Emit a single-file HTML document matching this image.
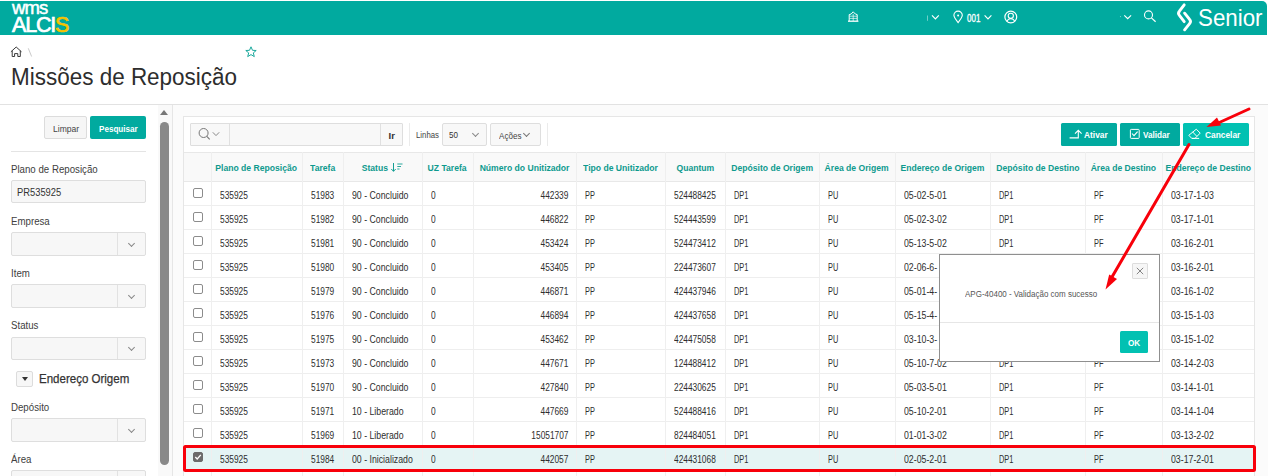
<!DOCTYPE html><html><head><meta charset="utf-8"><style>
*{box-sizing:border-box;margin:0;padding:0}
html,body{width:1268px;height:476px;overflow:hidden;background:#fff;font-family:"Liberation Sans",sans-serif;color:#3f3f3f}
.ab{position:absolute}
.t{position:absolute;white-space:nowrap;line-height:1}
.sx{display:inline-block;transform-origin:0 50%}
.hd{font-weight:bold;color:#0e9a8e;font-size:9.3px}
.cell{font-size:10px;color:#2e2e2e}
.lbl{font-size:11px;color:#404040}
.sel{position:absolute;left:11px;width:135px;height:23.5px;border:1px solid #dedede;background:#f7f7f7;border-radius:2px}
.sel i{position:absolute;left:105px;top:0;bottom:0;width:1px;background:#e2e2e2}
.chev{position:absolute;width:5px;height:5px;border-right:1px solid #777;border-bottom:1px solid #777;transform:rotate(45deg)}
.cb{position:absolute;width:10px;height:10px;border:1px solid #8c8c8c;border-radius:2px;background:#fff}
.btn{position:absolute;background:#01aa9f;border-radius:1.5px;color:#fff;font-weight:bold;font-size:9.5px}
</style></head><body>
<div class='ab' style='left:0;top:1px;width:1267px;height:33.5px;background:#01aa9f;border-top-right-radius:5px'></div>
<div class='t' style='left:12px;top:-1.5px;font-size:18.5px;color:#fff;letter-spacing:-0.9px;-webkit-text-stroke:0.5px #fff'><span class='sx' style='transform:scaleX(1.0)'>wms</span></div>
<div class='t' style='left:12px;top:14.5px;font-size:21.5px;color:#fff;letter-spacing:-1.2px;-webkit-text-stroke:0.7px #fff'><span class='sx' style='transform:scaleX(1.0)'>ALCI<span style='color:#f7c300;-webkit-text-stroke:0.7px #f7c300'>S</span></span></div>
<svg class='ab' style='left:0;top:40px' width='40' height='20' viewBox='0 40 40 20' fill='none'><path d='M10.9 51.8 L16.2 47 L21.5 51.8 M12.2 50.8 V56.5 H14.6 V53.6 H17.8 V56.5 H20.3 V50.8' stroke='#3a3a3a' stroke-width='1'/><path d='M28.3 48.3 L31.6 56.5' stroke='#bbb' stroke-width='0.8'/></svg>
<svg class='ab' style='left:245px;top:46px' width='12' height='12' viewBox='0 0 12 12'><path d='M6 0.8 L7.5 4.3 L11.2 4.5 L8.3 6.9 L9.3 10.6 L6 8.6 L2.7 10.6 L3.7 6.9 L0.8 4.5 L4.5 4.3 Z' fill='none' stroke='#1aa89c' stroke-width='1'/></svg>
<div class='t' style='left:10.5px;top:66px;font-size:23px;color:#2d2d2d'><span class='sx' style='transform:scaleX(0.977)'>Missões de Reposição</span></div>
<div class='ab' style='left:0;top:103.5px;width:1268px;height:1.5px;background:#e2e2e2'></div>
<div class='ab' style='left:173px;top:105px;width:1095px;height:371px;background:#fbfbfb'></div>
<div class='ab' style='left:172px;top:105px;width:1px;height:371px;background:#e6e6e6'></div>
<div class='ab' style='left:158px;top:105px;width:14px;height:371px;background:#f9f9f9'></div>
<div class='ab' style='left:160px;top:110px;width:0;height:0;border-left:4.5px solid transparent;border-right:4.5px solid transparent;border-bottom:5px solid #777'></div>
<div class='ab' style='left:160px;top:122px;width:9px;height:342.5px;background:#898989;border-radius:4.5px'></div>
<div class='ab' style='left:44px;top:116px;width:43px;height:23px;background:#f6f6f6;border:1px solid #dcdcdc;border-radius:2px'></div>
<div class='t' style='left:52.5px;top:124.5px;font-size:9px;color:#444'><span class='sx' style='transform:scaleX(0.95)'>Limpar</span></div>
<div class='ab' style='left:90px;top:116px;width:56px;height:23px;background:#01aa9f;border-radius:2px'></div>
<div class='t' style='left:99px;top:125px;font-size:9px;color:#fff;font-weight:bold'><span class='sx' style='transform:scaleX(0.9)'>Pesquisar</span></div>
<div class='ab' style='left:11px;top:151px;width:135px;height:1px;background:#e4e4e4'></div>
<div class='t lbl' style='left:11px;top:164.2px'><span class='sx' style='transform:scaleX(0.88)'>Plano de Reposição</span></div>
<div class='ab' style='left:11px;top:180px;width:135px;height:23px;background:#f7f7f7;border:1px solid #dedede;border-radius:2px'></div>
<div class='t' style='left:17px;top:187px;font-size:11px;color:#333'><span class='sx' style='transform:scaleX(0.85)'>PR535925</span></div>
<div class='t lbl' style='left:11px;top:216.0px'><span class='sx' style='transform:scaleX(0.88)'>Empresa</span></div>
<div class='sel' style='top:232px'><i></i><div class='chev' style='left:116.5px;top:7.5px;border-color:#888'></div></div>
<div class='t lbl' style='left:11px;top:268.0px'><span class='sx' style='transform:scaleX(0.88)'>Item</span></div>
<div class='sel' style='top:284px'><i></i><div class='chev' style='left:116.5px;top:7.5px;border-color:#888'></div></div>
<div class='t lbl' style='left:11px;top:320.1px'><span class='sx' style='transform:scaleX(0.88)'>Status</span></div>
<div class='sel' style='top:336.5px'><i></i><div class='chev' style='left:116.5px;top:7.5px;border-color:#888'></div></div>
<div class='ab' style='left:16px;top:371px;width:17px;height:16px;background:#f7f7f7;border:1px solid #dcdcdc;border-radius:2px'></div>
<div class='ab' style='left:21.5px;top:377px;width:0;height:0;border-left:3px solid transparent;border-right:3px solid transparent;border-top:4px solid #333'></div>
<div class='t' style='left:39px;top:373px;font-size:12.8px;color:#333;-webkit-text-stroke:0.25px #333'><span class='sx' style='transform:scaleX(0.9)'>Endereço Origem</span></div>
<div class='t lbl' style='left:11px;top:401.7px'><span class='sx' style='transform:scaleX(0.88)'>Depósito</span></div>
<div class='sel' style='top:418px'><i></i><div class='chev' style='left:116.5px;top:7.5px;border-color:#888'></div></div>
<div class='t lbl' style='left:11px;top:453.9px'><span class='sx' style='transform:scaleX(0.88)'>Área</span></div>
<div class='sel' style='top:470px'><i></i><div class='chev' style='left:116.5px;top:7.5px;border-color:#888'></div></div>
<div class='ab' style='left:183px;top:116px;width:1072px;height:370px;background:#fff;border:1px solid #e6e6e6'></div>
<div class='ab' style='left:190px;top:123px;width:213px;height:23px;background:#f8f8f8;border:1px solid #dedede;border-radius:1px'></div>
<div class='ab' style='left:229px;top:124px;width:1px;height:21px;background:#e0e0e0'></div>
<div class='ab' style='left:380px;top:124px;width:1px;height:21px;background:#e0e0e0'></div>
<svg class='ab' style='left:197px;top:127px' width='24' height='14' viewBox='0 0 24 14'><circle cx='6.6' cy='6' r='4.5' fill='none' stroke='#777' stroke-width='1'/><path d='M9.8 9.3 L12.7 12.4' stroke='#777' stroke-width='1.1'/><path d='M15.8 5.3 L19 8.6 L22.2 5.3' fill='none' stroke='#888' stroke-width='1'/></svg>
<div class='t' style='left:388.5px;top:131px;font-size:9.5px;color:#333;font-weight:bold'>Ir</div>
<div class='ab' style='left:409px;top:123px;width:1px;height:23px;background:#ebebeb'></div>
<div class='t' style='left:415.5px;top:130px;font-size:9.5px;color:#444'><span class='sx' style='transform:scaleX(0.82)'>Linhas</span></div>
<div class='ab' style='left:442px;top:123px;width:45px;height:23px;background:#f8f8f8;border:1px solid #dedede;border-radius:2px'></div>
<div class='t' style='left:449px;top:130px;font-size:9.5px;color:#333'><span class='sx' style='transform:scaleX(0.85)'>50</span></div>
<div class='chev' style='left:472.5px;top:131px;border-color:#888'></div>
<div class='ab' style='left:490px;top:123px;width:51px;height:23px;background:#f8f8f8;border:1px solid #dedede;border-radius:2px'></div>
<div class='t' style='left:498.5px;top:130.5px;font-size:9.5px;color:#444'><span class='sx' style='transform:scaleX(0.85)'>Ações</span></div>
<div class='chev' style='left:524px;top:130.5px;border-color:#777'></div>
<div class='ab' style='left:547px;top:123px;width:1px;height:23px;background:#ebebeb'></div>
<div class='btn' style='left:1061px;top:123px;width:56px;height:23px'></div>
<svg class='ab' style='left:1060px;top:120px' width='30' height='25' viewBox='1060 120 30 25'><path d='M1069.6 137.9 H1078.3 V130.8 M1075 133.6 L1078.3 130.3 L1081.6 133.6' fill='none' stroke='#fff' stroke-width='1.1'/></svg>
<div class='t' style='left:1084px;top:130px;font-size:9.5px;color:#fff;font-weight:bold'><span class='sx' style='transform:scaleX(0.88)'>Ativar</span></div>
<div class='btn' style='left:1120px;top:123px;width:60px;height:23px'></div>
<svg class='ab' style='left:1129px;top:128px' width='12' height='12' viewBox='0 0 12 12'><rect x='1.4' y='1.4' width='8.8' height='9' rx='0.8' fill='none' stroke='#fff' stroke-width='1'/><path d='M3 5.5 L5 7.7 L8.6 3.6' fill='none' stroke='#fff' stroke-width='1.1'/></svg>
<div class='t' style='left:1143px;top:130px;font-size:9.5px;color:#fff;font-weight:bold'><span class='sx' style='transform:scaleX(0.86)'>Validar</span></div>
<div class='btn' style='left:1183px;top:123px;width:66px;height:23px;background:#02c1b2'></div>
<svg class='ab' style='left:1180px;top:120px' width='30' height='25' viewBox='1180 120 30 25'><path d='M1188.8 135.3 L1196.3 129.2 L1200.2 133.1 L1195 138.4 H1191.8 Z M1192.5 131.8 L1196.7 136.2 M1191.8 138.4 H1199.2' fill='none' stroke='#fff' stroke-width='1'/></svg>
<div class='t' style='left:1205px;top:130px;font-size:9.5px;color:#fff;font-weight:bold'><span class='sx' style='transform:scaleX(0.88)'>Cancelar</span></div>
<div class='ab' style='left:183px;top:152px;width:1072px;height:30px;background:#f9f9f9;border-top:1px solid #e8e8e8;border-bottom:1px solid #e8e8e8'></div>
<div class='t hd' style='left:211px;width:91px;top:163.6px;text-align:center'><span class='sx' style='transform:scaleX(0.925);transform-origin:50% 50%'>Plano de Reposição</span></div>
<div class='t hd' style='left:302px;width:41px;top:163.6px;text-align:center'><span class='sx' style='transform:scaleX(0.925);transform-origin:50% 50%'>Tarefa</span></div>
<div class='t hd' style='left:343px;width:79px;top:163.6px;text-align:center'><span class='sx' style='transform:scaleX(0.925);transform-origin:50% 50%'>Status <span style='display:inline-block;width:14px'></span></span></div>
<div class='t hd' style='left:422px;width:51px;top:163.6px;text-align:center'><span class='sx' style='transform:scaleX(0.925);transform-origin:50% 50%'>UZ Tarefa</span></div>
<div class='t hd' style='left:473px;width:103px;top:163.6px;text-align:center'><span class='sx' style='transform:scaleX(0.925);transform-origin:50% 50%'>Número do Unitizador</span></div>
<div class='t hd' style='left:576px;width:89px;top:163.6px;text-align:center'><span class='sx' style='transform:scaleX(0.925);transform-origin:50% 50%'>Tipo de Unitizador</span></div>
<div class='t hd' style='left:665px;width:60px;top:163.6px;text-align:center'><span class='sx' style='transform:scaleX(0.925);transform-origin:50% 50%'>Quantum</span></div>
<div class='t hd' style='left:725px;width:94px;top:163.6px;text-align:center'><span class='sx' style='transform:scaleX(0.925);transform-origin:50% 50%'>Depósito de Origem</span></div>
<div class='t hd' style='left:819px;width:76px;top:163.6px;text-align:center'><span class='sx' style='transform:scaleX(0.925);transform-origin:50% 50%'>Área de Origem</span></div>
<div class='t hd' style='left:895px;width:95px;top:163.6px;text-align:center'><span class='sx' style='transform:scaleX(0.925);transform-origin:50% 50%'>Endereço de Origem</span></div>
<div class='t hd' style='left:990px;width:95px;top:163.6px;text-align:center'><span class='sx' style='transform:scaleX(0.925);transform-origin:50% 50%'>Depósito de Destino</span></div>
<div class='t hd' style='left:1085px;width:77px;top:163.6px;text-align:center'><span class='sx' style='transform:scaleX(0.925);transform-origin:50% 50%'>Área de Destino</span></div>
<div class='t hd' style='left:1162px;width:92px;top:163.6px;text-align:center'><span class='sx' style='transform:scaleX(0.925);transform-origin:50% 50%'>Endereço de Destino</span></div>
<svg class='ab' style='left:388px;top:160px' width='18' height='14' viewBox='0 0 18 14'><path d='M5.5 3 V11.3 M3.3 9 L5.5 11.3 L7.7 9' fill='none' stroke='#129e93' stroke-width='1'/><path d='M9.3 4 H14.5 M9.3 6.5 H13 M9.3 9 H11.5' stroke='#129e93' stroke-width='0.9'/></svg>
<div class='ab' style='left:184px;top:205px;width:1070px;height:1px;background:#eeeeee'></div>
<div class='cb' style='left:193px;top:188px'></div>
<div class='t cell' style='left:220px;top:190.6px'><span class='sx' style='transform:scaleX(0.835)'>535925</span></div>
<div class='t cell' style='left:311px;top:190.6px'><span class='sx' style='transform:scaleX(0.835)'>51983</span></div>
<div class='t cell' style='left:352px;top:190.6px'><span class='sx' style='transform:scaleX(0.875)'>90 - Concluido</span></div>
<div class='t cell' style='left:431px;top:190.6px'><span class='sx' style='transform:scaleX(0.835)'>0</span></div>
<div class='t cell' style='left:473px;width:95px;top:190.6px;text-align:right'><span class='sx' style='transform:scaleX(0.835);transform-origin:100% 50%'>442339</span></div>
<div class='t cell' style='left:585px;top:190.6px'><span class='sx' style='transform:scaleX(0.74)'>PP</span></div>
<div class='t cell' style='left:674px;top:190.6px'><span class='sx' style='transform:scaleX(0.835)'>524488425</span></div>
<div class='t cell' style='left:734px;top:190.6px'><span class='sx' style='transform:scaleX(0.74)'>DP1</span></div>
<div class='t cell' style='left:828px;top:190.6px'><span class='sx' style='transform:scaleX(0.74)'>PU</span></div>
<div class='t cell' style='left:904px;top:190.6px'><span class='sx' style='transform:scaleX(0.875)'>05-02-5-01</span></div>
<div class='t cell' style='left:999px;top:190.6px'><span class='sx' style='transform:scaleX(0.74)'>DP1</span></div>
<div class='t cell' style='left:1094px;top:190.6px'><span class='sx' style='transform:scaleX(0.74)'>PF</span></div>
<div class='t cell' style='left:1171px;top:190.6px'><span class='sx' style='transform:scaleX(0.875)'>03-17-1-03</span></div>
<div class='ab' style='left:184px;top:229px;width:1070px;height:1px;background:#eeeeee'></div>
<div class='cb' style='left:193px;top:212px'></div>
<div class='t cell' style='left:220px;top:214.6px'><span class='sx' style='transform:scaleX(0.835)'>535925</span></div>
<div class='t cell' style='left:311px;top:214.6px'><span class='sx' style='transform:scaleX(0.835)'>51982</span></div>
<div class='t cell' style='left:352px;top:214.6px'><span class='sx' style='transform:scaleX(0.875)'>90 - Concluido</span></div>
<div class='t cell' style='left:431px;top:214.6px'><span class='sx' style='transform:scaleX(0.835)'>0</span></div>
<div class='t cell' style='left:473px;width:95px;top:214.6px;text-align:right'><span class='sx' style='transform:scaleX(0.835);transform-origin:100% 50%'>446822</span></div>
<div class='t cell' style='left:585px;top:214.6px'><span class='sx' style='transform:scaleX(0.74)'>PP</span></div>
<div class='t cell' style='left:674px;top:214.6px'><span class='sx' style='transform:scaleX(0.835)'>524443599</span></div>
<div class='t cell' style='left:734px;top:214.6px'><span class='sx' style='transform:scaleX(0.74)'>DP1</span></div>
<div class='t cell' style='left:828px;top:214.6px'><span class='sx' style='transform:scaleX(0.74)'>PU</span></div>
<div class='t cell' style='left:904px;top:214.6px'><span class='sx' style='transform:scaleX(0.875)'>05-02-3-02</span></div>
<div class='t cell' style='left:999px;top:214.6px'><span class='sx' style='transform:scaleX(0.74)'>DP1</span></div>
<div class='t cell' style='left:1094px;top:214.6px'><span class='sx' style='transform:scaleX(0.74)'>PF</span></div>
<div class='t cell' style='left:1171px;top:214.6px'><span class='sx' style='transform:scaleX(0.875)'>03-17-1-01</span></div>
<div class='ab' style='left:184px;top:253px;width:1070px;height:1px;background:#eeeeee'></div>
<div class='cb' style='left:193px;top:236px'></div>
<div class='t cell' style='left:220px;top:238.6px'><span class='sx' style='transform:scaleX(0.835)'>535925</span></div>
<div class='t cell' style='left:311px;top:238.6px'><span class='sx' style='transform:scaleX(0.835)'>51981</span></div>
<div class='t cell' style='left:352px;top:238.6px'><span class='sx' style='transform:scaleX(0.875)'>90 - Concluido</span></div>
<div class='t cell' style='left:431px;top:238.6px'><span class='sx' style='transform:scaleX(0.835)'>0</span></div>
<div class='t cell' style='left:473px;width:95px;top:238.6px;text-align:right'><span class='sx' style='transform:scaleX(0.835);transform-origin:100% 50%'>453424</span></div>
<div class='t cell' style='left:585px;top:238.6px'><span class='sx' style='transform:scaleX(0.74)'>PP</span></div>
<div class='t cell' style='left:674px;top:238.6px'><span class='sx' style='transform:scaleX(0.835)'>524473412</span></div>
<div class='t cell' style='left:734px;top:238.6px'><span class='sx' style='transform:scaleX(0.74)'>DP1</span></div>
<div class='t cell' style='left:828px;top:238.6px'><span class='sx' style='transform:scaleX(0.74)'>PU</span></div>
<div class='t cell' style='left:904px;top:238.6px'><span class='sx' style='transform:scaleX(0.875)'>05-13-5-02</span></div>
<div class='t cell' style='left:999px;top:238.6px'><span class='sx' style='transform:scaleX(0.74)'>DP1</span></div>
<div class='t cell' style='left:1094px;top:238.6px'><span class='sx' style='transform:scaleX(0.74)'>PF</span></div>
<div class='t cell' style='left:1171px;top:238.6px'><span class='sx' style='transform:scaleX(0.875)'>03-16-2-01</span></div>
<div class='ab' style='left:184px;top:277px;width:1070px;height:1px;background:#eeeeee'></div>
<div class='cb' style='left:193px;top:260px'></div>
<div class='t cell' style='left:220px;top:262.6px'><span class='sx' style='transform:scaleX(0.835)'>535925</span></div>
<div class='t cell' style='left:311px;top:262.6px'><span class='sx' style='transform:scaleX(0.835)'>51980</span></div>
<div class='t cell' style='left:352px;top:262.6px'><span class='sx' style='transform:scaleX(0.875)'>90 - Concluido</span></div>
<div class='t cell' style='left:431px;top:262.6px'><span class='sx' style='transform:scaleX(0.835)'>0</span></div>
<div class='t cell' style='left:473px;width:95px;top:262.6px;text-align:right'><span class='sx' style='transform:scaleX(0.835);transform-origin:100% 50%'>453405</span></div>
<div class='t cell' style='left:585px;top:262.6px'><span class='sx' style='transform:scaleX(0.74)'>PP</span></div>
<div class='t cell' style='left:674px;top:262.6px'><span class='sx' style='transform:scaleX(0.835)'>224473607</span></div>
<div class='t cell' style='left:734px;top:262.6px'><span class='sx' style='transform:scaleX(0.74)'>DP1</span></div>
<div class='t cell' style='left:828px;top:262.6px'><span class='sx' style='transform:scaleX(0.74)'>PU</span></div>
<div class='t cell' style='left:904px;top:262.6px'><span class='sx' style='transform:scaleX(0.875)'>02-06-6-</span></div>
<div class='t cell' style='left:999px;top:262.6px'><span class='sx' style='transform:scaleX(0.74)'>DP1</span></div>
<div class='t cell' style='left:1094px;top:262.6px'><span class='sx' style='transform:scaleX(0.74)'>PF</span></div>
<div class='t cell' style='left:1171px;top:262.6px'><span class='sx' style='transform:scaleX(0.875)'>03-16-2-01</span></div>
<div class='ab' style='left:184px;top:301px;width:1070px;height:1px;background:#eeeeee'></div>
<div class='cb' style='left:193px;top:284px'></div>
<div class='t cell' style='left:220px;top:286.6px'><span class='sx' style='transform:scaleX(0.835)'>535925</span></div>
<div class='t cell' style='left:311px;top:286.6px'><span class='sx' style='transform:scaleX(0.835)'>51979</span></div>
<div class='t cell' style='left:352px;top:286.6px'><span class='sx' style='transform:scaleX(0.875)'>90 - Concluido</span></div>
<div class='t cell' style='left:431px;top:286.6px'><span class='sx' style='transform:scaleX(0.835)'>0</span></div>
<div class='t cell' style='left:473px;width:95px;top:286.6px;text-align:right'><span class='sx' style='transform:scaleX(0.835);transform-origin:100% 50%'>446871</span></div>
<div class='t cell' style='left:585px;top:286.6px'><span class='sx' style='transform:scaleX(0.74)'>PP</span></div>
<div class='t cell' style='left:674px;top:286.6px'><span class='sx' style='transform:scaleX(0.835)'>424437946</span></div>
<div class='t cell' style='left:734px;top:286.6px'><span class='sx' style='transform:scaleX(0.74)'>DP1</span></div>
<div class='t cell' style='left:828px;top:286.6px'><span class='sx' style='transform:scaleX(0.74)'>PU</span></div>
<div class='t cell' style='left:904px;top:286.6px'><span class='sx' style='transform:scaleX(0.875)'>05-01-4-</span></div>
<div class='t cell' style='left:999px;top:286.6px'><span class='sx' style='transform:scaleX(0.74)'>DP1</span></div>
<div class='t cell' style='left:1094px;top:286.6px'><span class='sx' style='transform:scaleX(0.74)'>PF</span></div>
<div class='t cell' style='left:1171px;top:286.6px'><span class='sx' style='transform:scaleX(0.875)'>03-16-1-02</span></div>
<div class='ab' style='left:184px;top:325px;width:1070px;height:1px;background:#eeeeee'></div>
<div class='cb' style='left:193px;top:308px'></div>
<div class='t cell' style='left:220px;top:310.6px'><span class='sx' style='transform:scaleX(0.835)'>535925</span></div>
<div class='t cell' style='left:311px;top:310.6px'><span class='sx' style='transform:scaleX(0.835)'>51976</span></div>
<div class='t cell' style='left:352px;top:310.6px'><span class='sx' style='transform:scaleX(0.875)'>90 - Concluido</span></div>
<div class='t cell' style='left:431px;top:310.6px'><span class='sx' style='transform:scaleX(0.835)'>0</span></div>
<div class='t cell' style='left:473px;width:95px;top:310.6px;text-align:right'><span class='sx' style='transform:scaleX(0.835);transform-origin:100% 50%'>446894</span></div>
<div class='t cell' style='left:585px;top:310.6px'><span class='sx' style='transform:scaleX(0.74)'>PP</span></div>
<div class='t cell' style='left:674px;top:310.6px'><span class='sx' style='transform:scaleX(0.835)'>424437658</span></div>
<div class='t cell' style='left:734px;top:310.6px'><span class='sx' style='transform:scaleX(0.74)'>DP1</span></div>
<div class='t cell' style='left:828px;top:310.6px'><span class='sx' style='transform:scaleX(0.74)'>PU</span></div>
<div class='t cell' style='left:904px;top:310.6px'><span class='sx' style='transform:scaleX(0.875)'>05-15-4-</span></div>
<div class='t cell' style='left:999px;top:310.6px'><span class='sx' style='transform:scaleX(0.74)'>DP1</span></div>
<div class='t cell' style='left:1094px;top:310.6px'><span class='sx' style='transform:scaleX(0.74)'>PF</span></div>
<div class='t cell' style='left:1171px;top:310.6px'><span class='sx' style='transform:scaleX(0.875)'>03-15-1-03</span></div>
<div class='ab' style='left:184px;top:349px;width:1070px;height:1px;background:#eeeeee'></div>
<div class='cb' style='left:193px;top:332px'></div>
<div class='t cell' style='left:220px;top:334.6px'><span class='sx' style='transform:scaleX(0.835)'>535925</span></div>
<div class='t cell' style='left:311px;top:334.6px'><span class='sx' style='transform:scaleX(0.835)'>51975</span></div>
<div class='t cell' style='left:352px;top:334.6px'><span class='sx' style='transform:scaleX(0.875)'>90 - Concluido</span></div>
<div class='t cell' style='left:431px;top:334.6px'><span class='sx' style='transform:scaleX(0.835)'>0</span></div>
<div class='t cell' style='left:473px;width:95px;top:334.6px;text-align:right'><span class='sx' style='transform:scaleX(0.835);transform-origin:100% 50%'>453462</span></div>
<div class='t cell' style='left:585px;top:334.6px'><span class='sx' style='transform:scaleX(0.74)'>PP</span></div>
<div class='t cell' style='left:674px;top:334.6px'><span class='sx' style='transform:scaleX(0.835)'>424475058</span></div>
<div class='t cell' style='left:734px;top:334.6px'><span class='sx' style='transform:scaleX(0.74)'>DP1</span></div>
<div class='t cell' style='left:828px;top:334.6px'><span class='sx' style='transform:scaleX(0.74)'>PU</span></div>
<div class='t cell' style='left:904px;top:334.6px'><span class='sx' style='transform:scaleX(0.875)'>03-10-3-</span></div>
<div class='t cell' style='left:999px;top:334.6px'><span class='sx' style='transform:scaleX(0.74)'>DP1</span></div>
<div class='t cell' style='left:1094px;top:334.6px'><span class='sx' style='transform:scaleX(0.74)'>PF</span></div>
<div class='t cell' style='left:1171px;top:334.6px'><span class='sx' style='transform:scaleX(0.875)'>03-15-1-02</span></div>
<div class='ab' style='left:184px;top:373px;width:1070px;height:1px;background:#eeeeee'></div>
<div class='cb' style='left:193px;top:356px'></div>
<div class='t cell' style='left:220px;top:358.6px'><span class='sx' style='transform:scaleX(0.835)'>535925</span></div>
<div class='t cell' style='left:311px;top:358.6px'><span class='sx' style='transform:scaleX(0.835)'>51973</span></div>
<div class='t cell' style='left:352px;top:358.6px'><span class='sx' style='transform:scaleX(0.875)'>90 - Concluido</span></div>
<div class='t cell' style='left:431px;top:358.6px'><span class='sx' style='transform:scaleX(0.835)'>0</span></div>
<div class='t cell' style='left:473px;width:95px;top:358.6px;text-align:right'><span class='sx' style='transform:scaleX(0.835);transform-origin:100% 50%'>447671</span></div>
<div class='t cell' style='left:585px;top:358.6px'><span class='sx' style='transform:scaleX(0.74)'>PP</span></div>
<div class='t cell' style='left:674px;top:358.6px'><span class='sx' style='transform:scaleX(0.835)'>124488412</span></div>
<div class='t cell' style='left:734px;top:358.6px'><span class='sx' style='transform:scaleX(0.74)'>DP1</span></div>
<div class='t cell' style='left:828px;top:358.6px'><span class='sx' style='transform:scaleX(0.74)'>PU</span></div>
<div class='t cell' style='left:904px;top:358.6px'><span class='sx' style='transform:scaleX(0.875)'>05-10-7-02</span></div>
<div class='t cell' style='left:999px;top:358.6px'><span class='sx' style='transform:scaleX(0.74)'>DP1</span></div>
<div class='t cell' style='left:1094px;top:358.6px'><span class='sx' style='transform:scaleX(0.74)'>PF</span></div>
<div class='t cell' style='left:1171px;top:358.6px'><span class='sx' style='transform:scaleX(0.875)'>03-14-2-03</span></div>
<div class='ab' style='left:184px;top:397px;width:1070px;height:1px;background:#eeeeee'></div>
<div class='cb' style='left:193px;top:380px'></div>
<div class='t cell' style='left:220px;top:382.6px'><span class='sx' style='transform:scaleX(0.835)'>535925</span></div>
<div class='t cell' style='left:311px;top:382.6px'><span class='sx' style='transform:scaleX(0.835)'>51970</span></div>
<div class='t cell' style='left:352px;top:382.6px'><span class='sx' style='transform:scaleX(0.875)'>90 - Concluido</span></div>
<div class='t cell' style='left:431px;top:382.6px'><span class='sx' style='transform:scaleX(0.835)'>0</span></div>
<div class='t cell' style='left:473px;width:95px;top:382.6px;text-align:right'><span class='sx' style='transform:scaleX(0.835);transform-origin:100% 50%'>427840</span></div>
<div class='t cell' style='left:585px;top:382.6px'><span class='sx' style='transform:scaleX(0.74)'>PP</span></div>
<div class='t cell' style='left:674px;top:382.6px'><span class='sx' style='transform:scaleX(0.835)'>224430625</span></div>
<div class='t cell' style='left:734px;top:382.6px'><span class='sx' style='transform:scaleX(0.74)'>DP1</span></div>
<div class='t cell' style='left:828px;top:382.6px'><span class='sx' style='transform:scaleX(0.74)'>PU</span></div>
<div class='t cell' style='left:904px;top:382.6px'><span class='sx' style='transform:scaleX(0.875)'>05-03-5-01</span></div>
<div class='t cell' style='left:999px;top:382.6px'><span class='sx' style='transform:scaleX(0.74)'>DP1</span></div>
<div class='t cell' style='left:1094px;top:382.6px'><span class='sx' style='transform:scaleX(0.74)'>PF</span></div>
<div class='t cell' style='left:1171px;top:382.6px'><span class='sx' style='transform:scaleX(0.875)'>03-14-1-01</span></div>
<div class='ab' style='left:184px;top:421px;width:1070px;height:1px;background:#eeeeee'></div>
<div class='cb' style='left:193px;top:404px'></div>
<div class='t cell' style='left:220px;top:406.6px'><span class='sx' style='transform:scaleX(0.835)'>535925</span></div>
<div class='t cell' style='left:311px;top:406.6px'><span class='sx' style='transform:scaleX(0.835)'>51971</span></div>
<div class='t cell' style='left:352px;top:406.6px'><span class='sx' style='transform:scaleX(0.875)'>10 - Liberado</span></div>
<div class='t cell' style='left:431px;top:406.6px'><span class='sx' style='transform:scaleX(0.835)'>0</span></div>
<div class='t cell' style='left:473px;width:95px;top:406.6px;text-align:right'><span class='sx' style='transform:scaleX(0.835);transform-origin:100% 50%'>447669</span></div>
<div class='t cell' style='left:585px;top:406.6px'><span class='sx' style='transform:scaleX(0.74)'>PP</span></div>
<div class='t cell' style='left:674px;top:406.6px'><span class='sx' style='transform:scaleX(0.835)'>524488416</span></div>
<div class='t cell' style='left:734px;top:406.6px'><span class='sx' style='transform:scaleX(0.74)'>DP1</span></div>
<div class='t cell' style='left:828px;top:406.6px'><span class='sx' style='transform:scaleX(0.74)'>PU</span></div>
<div class='t cell' style='left:904px;top:406.6px'><span class='sx' style='transform:scaleX(0.875)'>05-10-2-01</span></div>
<div class='t cell' style='left:999px;top:406.6px'><span class='sx' style='transform:scaleX(0.74)'>DP1</span></div>
<div class='t cell' style='left:1094px;top:406.6px'><span class='sx' style='transform:scaleX(0.74)'>PF</span></div>
<div class='t cell' style='left:1171px;top:406.6px'><span class='sx' style='transform:scaleX(0.875)'>03-14-1-04</span></div>
<div class='ab' style='left:184px;top:445px;width:1070px;height:1px;background:#eeeeee'></div>
<div class='cb' style='left:193px;top:428px'></div>
<div class='t cell' style='left:220px;top:430.6px'><span class='sx' style='transform:scaleX(0.835)'>535925</span></div>
<div class='t cell' style='left:311px;top:430.6px'><span class='sx' style='transform:scaleX(0.835)'>51969</span></div>
<div class='t cell' style='left:352px;top:430.6px'><span class='sx' style='transform:scaleX(0.875)'>10 - Liberado</span></div>
<div class='t cell' style='left:431px;top:430.6px'><span class='sx' style='transform:scaleX(0.835)'>0</span></div>
<div class='t cell' style='left:473px;width:95px;top:430.6px;text-align:right'><span class='sx' style='transform:scaleX(0.835);transform-origin:100% 50%'>15051707</span></div>
<div class='t cell' style='left:585px;top:430.6px'><span class='sx' style='transform:scaleX(0.74)'>PP</span></div>
<div class='t cell' style='left:674px;top:430.6px'><span class='sx' style='transform:scaleX(0.835)'>824484051</span></div>
<div class='t cell' style='left:734px;top:430.6px'><span class='sx' style='transform:scaleX(0.74)'>DP1</span></div>
<div class='t cell' style='left:828px;top:430.6px'><span class='sx' style='transform:scaleX(0.74)'>PU</span></div>
<div class='t cell' style='left:904px;top:430.6px'><span class='sx' style='transform:scaleX(0.875)'>01-01-3-02</span></div>
<div class='t cell' style='left:999px;top:430.6px'><span class='sx' style='transform:scaleX(0.74)'>DP1</span></div>
<div class='t cell' style='left:1094px;top:430.6px'><span class='sx' style='transform:scaleX(0.74)'>PF</span></div>
<div class='t cell' style='left:1171px;top:430.6px'><span class='sx' style='transform:scaleX(0.875)'>03-13-2-02</span></div>
<div class='ab' style='left:184px;top:446px;width:1070px;height:24px;background:#e5f4f4'></div>
<div class='ab' style='left:184px;top:469px;width:1070px;height:1px;background:#eeeeee'></div>
<div class='cb' style='left:193px;top:452px;background:#6b6b6b;border-color:#6b6b6b'><svg style='position:absolute;left:0;top:0' width='8' height='8' viewBox='0 0 8 8'><path d='M1.3 4 L3.2 6 L6.8 1.8' fill='none' stroke='#fff' stroke-width='1.3'/></svg></div>
<div class='t cell' style='left:220px;top:454.6px'><span class='sx' style='transform:scaleX(0.835)'>535925</span></div>
<div class='t cell' style='left:311px;top:454.6px'><span class='sx' style='transform:scaleX(0.835)'>51984</span></div>
<div class='t cell' style='left:352px;top:454.6px'><span class='sx' style='transform:scaleX(0.875)'>00 - Inicializado</span></div>
<div class='t cell' style='left:431px;top:454.6px'><span class='sx' style='transform:scaleX(0.835)'>0</span></div>
<div class='t cell' style='left:473px;width:95px;top:454.6px;text-align:right'><span class='sx' style='transform:scaleX(0.835);transform-origin:100% 50%'>442057</span></div>
<div class='t cell' style='left:585px;top:454.6px'><span class='sx' style='transform:scaleX(0.74)'>PP</span></div>
<div class='t cell' style='left:674px;top:454.6px'><span class='sx' style='transform:scaleX(0.835)'>424431068</span></div>
<div class='t cell' style='left:734px;top:454.6px'><span class='sx' style='transform:scaleX(0.74)'>DP1</span></div>
<div class='t cell' style='left:828px;top:454.6px'><span class='sx' style='transform:scaleX(0.74)'>PU</span></div>
<div class='t cell' style='left:904px;top:454.6px'><span class='sx' style='transform:scaleX(0.875)'>02-05-2-01</span></div>
<div class='t cell' style='left:999px;top:454.6px'><span class='sx' style='transform:scaleX(0.74)'>DP1</span></div>
<div class='t cell' style='left:1094px;top:454.6px'><span class='sx' style='transform:scaleX(0.74)'>PF</span></div>
<div class='t cell' style='left:1171px;top:454.6px'><span class='sx' style='transform:scaleX(0.875)'>03-17-2-01</span></div>
<div class='ab' style='left:211px;top:152px;width:1px;height:330px;background:#efefef'></div>
<div class='ab' style='left:302px;top:152px;width:1px;height:330px;background:#efefef'></div>
<div class='ab' style='left:343px;top:152px;width:1px;height:330px;background:#efefef'></div>
<div class='ab' style='left:422px;top:152px;width:1px;height:330px;background:#efefef'></div>
<div class='ab' style='left:473px;top:152px;width:1px;height:330px;background:#efefef'></div>
<div class='ab' style='left:576px;top:152px;width:1px;height:330px;background:#efefef'></div>
<div class='ab' style='left:665px;top:152px;width:1px;height:330px;background:#efefef'></div>
<div class='ab' style='left:725px;top:152px;width:1px;height:330px;background:#efefef'></div>
<div class='ab' style='left:819px;top:152px;width:1px;height:330px;background:#efefef'></div>
<div class='ab' style='left:895px;top:152px;width:1px;height:330px;background:#efefef'></div>
<div class='ab' style='left:990px;top:152px;width:1px;height:330px;background:#efefef'></div>
<div class='ab' style='left:1085px;top:152px;width:1px;height:330px;background:#efefef'></div>
<div class='ab' style='left:1162px;top:152px;width:1px;height:330px;background:#efefef'></div>
<div class='ab' style='left:183px;top:116px;width:1px;height:360px;background:#e6e6e6'></div>
<div class='ab' style='left:1254px;top:116px;width:1px;height:360px;background:#e6e6e6'></div>
<div class='ab' style='left:183px;top:445px;width:1073px;height:27px;border:3px solid #f8000a;border-radius:2.5px'></div>
<div class='ab' style='left:939px;top:254px;width:221px;height:108px;background:#fff;border:1px solid #8f8f8f'></div>
<div class='ab' style='left:940px;top:322px;width:219px;height:1px;background:#e6e6e6'></div>
<div class='ab' style='left:1132px;top:262.5px;width:16px;height:16px;background:#f6f6f6;border:1px solid #ddd;border-radius:1px'></div>
<svg class='ab' style='left:1135px;top:265.5px' width='10' height='10' viewBox='0 0 10 10'><path d='M1.8 1.8 L8.2 8.2 M8.2 1.8 L1.8 8.2' stroke='#777' stroke-width='0.9'/></svg>
<div class='t' style='left:964.5px;top:289.5px;font-size:9.2px;color:#555'><span class='sx' style='transform:scaleX(0.87)'>APG-40400 - Validação com sucesso</span></div>
<div class='btn' style='left:1120px;top:331px;width:28px;height:22px;background:#02c1b2'></div>
<div class='t' style='left:1128px;top:337.5px;font-size:9.5px;color:#fff;font-weight:bold'><span class='sx' style='transform:scaleX(0.86)'>OK</span></div>
<svg class='ab' style='left:0;top:0' width='1268' height='40' viewBox='0 0 1268 40' fill='none' stroke='#fff'>
<path d='M849.2 21 V14.6 L851.2 14 L853.2 11.8 L855.3 14 L857.2 14.6 V21' stroke-width='1'/>
<path d='M848 21.2 H858.4' stroke-width='1.3'/>
<path d='M849.5 16.2 H857 M849.5 18.4 H857 M853.2 14 V21' stroke-width='0.8' opacity='0.85'/>
<path d='M927.5 15.5 V20.8' stroke-width='0.8' opacity='0.55'/>
<path d='M932 15.4 L935.4 18.8 L938.8 15.4' stroke-width='1.2'/>
<path d='M958.1 22.6 C955.5 19.3 953.9 17 953.9 15.3 A4.2 4.2 0 0 1 962.3 15.3 C962.3 17 960.7 19.3 958.1 22.6 Z' stroke-width='1.1'/>
<circle cx='958.1' cy='15.4' r='1' fill='#fff' stroke='none'/>
<path d='M984.6 15.4 L988 18.8 L991.4 15.4' stroke-width='1.2'/>
<circle cx='1010.8' cy='17' r='5.9' stroke-width='1.2'/>
<circle cx='1010.8' cy='15.8' r='2.6' stroke-width='1.1'/>
<path d='M1006.8 21.3 C1007.8 19.4 1009 18.6 1010.8 18.6 C1012.6 18.6 1013.8 19.4 1014.8 21.3' stroke-width='1.1'/>
<circle cx='1120.5' cy='16.6' r='0.6' fill='#fff' stroke='none' opacity='0.5'/>
<path d='M1124.3 15.4 L1127.7 18.7 L1131.1 15.4' stroke-width='1.2'/>
<circle cx='1148.5' cy='14.9' r='4' stroke-width='1.1'/>
<path d='M1151.4 17.9 L1155.6 21.8' stroke-width='1.2'/>
</svg>
<div class='t' style='left:966.5px;top:14px;font-size:10px;color:#fff;-webkit-text-stroke:0.3px #fff'><span class='sx' style='transform:scaleX(0.8)'>001</span></div>
<svg class='ab' style='left:0;top:0' width='1268' height='40' viewBox='0 0 1268 40'><path d='M1184.2 4.8 L1179.4 11.2 Q1177.6 13.3 1179.4 15.4 L1184.2 21.6 M1184.6 13.2 L1189.6 19.4 Q1191.4 21.5 1189.6 23.6 L1184.6 29.8' fill='none' stroke='#fff' stroke-width='2.9' stroke-linecap='round' stroke-linejoin='round'/></svg>
<div class='t' style='left:1197.5px;top:5.5px;font-size:24px;color:#fff'><span class='sx' style='transform:scaleX(0.93)'>Senior</span></div>
<svg class='ab' style='left:0;top:0' width='1268' height='476' viewBox='0 0 1268 476'>
<path d='M1249 109 L1216 124' stroke='#f8000a' stroke-width='3' stroke-linecap='round'/>
<path d='M1206.5 127 L1217 117.5 L1221 125.5 Z' fill='#f8000a'/>
<path d='M1189 144.5 L1112 277' stroke='#f8000a' stroke-width='3' stroke-linecap='round'/>
<path d='M1105.5 289.5 L1109.2 274.5 L1117 279 Z' fill='#f8000a'/>
</svg>
</body></html>
